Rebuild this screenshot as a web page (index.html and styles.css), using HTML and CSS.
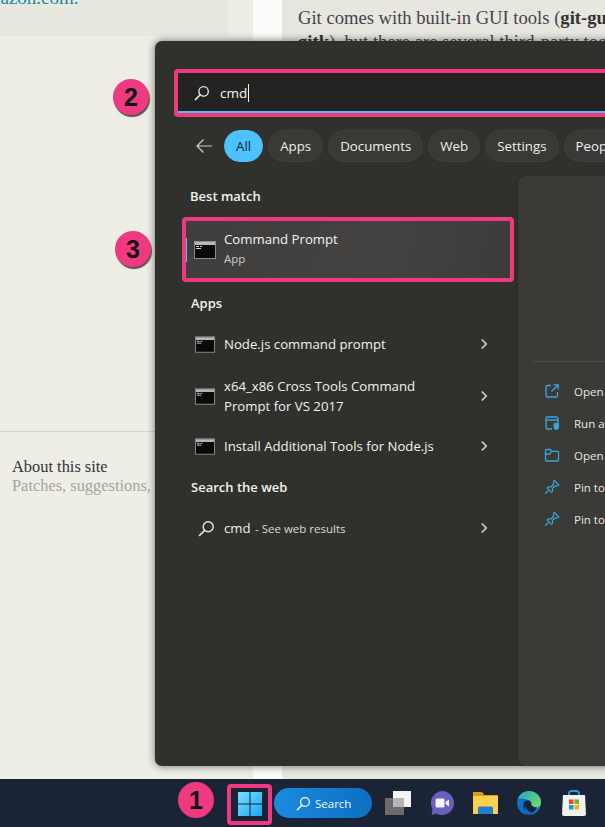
FILE: index.html
```html
<!DOCTYPE html>
<html lang="en">
<head>
<meta charset="utf-8">
<title>Open Command Prompt</title>
<link rel="stylesheet" href="styles.css">
</head>
<body>
<svg class="defs" width="0" height="0" aria-hidden="true">
  <defs>
    <symbol id="cmd" viewBox="0 0 22 18">
      <rect x="0.5" y="0.5" width="21" height="17" fill="#0a0a0a" stroke="#8e8e8c"/>
      <rect x="1" y="1" width="20" height="3" fill="#b9b9b7"/>
      <path d="M2 5.500h3M2 7.500h5M6 5.500h2" stroke="#d8d8d8" stroke-width="1"/>
    </symbol>
    <symbol id="lens" viewBox="0 0 16 16">
      <circle cx="9.6" cy="6.4" r="4.7" fill="none" stroke="currentColor" stroke-width="1.3"/>
      <path d="M6.2 9.8 1.4 14.6" stroke="currentColor" stroke-width="1.5" stroke-linecap="round"/>
    </symbol>
    <symbol id="chev" viewBox="0 0 8 12">
      <path d="M1.8 1.5 6.2 6 1.8 10.5" fill="none" stroke="currentColor" stroke-width="1.7"/>
    </symbol>
    <symbol id="pin" viewBox="0 0 16 16">
      <path d="M10 1.2 14.8 6l-1.3.6-3 .6-2.2 2.4.2 3-1 .8-4.5-4.6.9-1 2.9.2 2.4-2.3.6-3z" fill="none" stroke="#3aa6e0" stroke-width="1.2" stroke-linejoin="round"/>
      <path d="M4.6 11.4 1.2 14.8" stroke="#3aa6e0" stroke-width="1.3"/>
    </symbol>
  </defs>
</svg>

<div class="site">
  <div class="site-left">
    <div class="note"><p class="note-text">Amazon.com.</p></div>
    <div class="about">
      <p class="about-title">About this site</p>
      <p class="about-sub">Patches, suggestions, and comments are welcome.</p>
    </div>
  </div>
  <div class="site-gutter"></div>
  <div class="site-main">
    <p class="article">Git comes with built-in GUI tools (<b>git-gui</b>, <b>gitk</b>), but there are several third-party tools</p>
  </div>
</div>

<section class="start">
  <div class="searchbox">
    <div class="searchfield">
      <svg class="search-lens"><use href="#lens"/></svg>
      <span class="query">cmd</span><span class="caret"></span>
    </div>
  </div>
  <div class="filters">
    <svg class="back" viewBox="0 0 18 16"><path d="M17 8H2M8.500 1.500 2 8l6.500 6.500" fill="none" stroke="#cfcfcc" stroke-width="1.200"/></svg>
    <span class="pill pill-active">All</span>
    <span class="pill">Apps</span>
    <span class="pill">Documents</span>
    <span class="pill">Web</span>
    <span class="pill">Settings</span>
    <span class="pill">People</span>
  </div>
  <div class="results-wrap">
    <div class="results">
      <h2 class="label label-first">Best match</h2>
      <div class="best">
        <span class="best-mark"></span>
        <svg class="cmd-big"><use href="#cmd"/></svg>
        <div class="best-text">
          <span class="best-name">Command Prompt</span>
          <span class="best-kind">App</span>
        </div>
      </div>
      <h2 class="label label-apps">Apps</h2>
      <div class="row row-node">
        <svg class="cmd-small"><use href="#cmd"/></svg>
        <span class="row-text">Node.js command prompt</span>
        <svg class="chev"><use href="#chev"/></svg>
      </div>
      <div class="row row-tall">
        <svg class="cmd-small"><use href="#cmd"/></svg>
        <span class="row-text">x64_x86 Cross Tools Command Prompt for VS 2017</span>
        <svg class="chev"><use href="#chev"/></svg>
      </div>
      <div class="row row-install">
        <svg class="cmd-small"><use href="#cmd"/></svg>
        <span class="row-text">Install Additional Tools for Node.js</span>
        <svg class="chev"><use href="#chev"/></svg>
      </div>
      <h2 class="label label-web">Search the web</h2>
      <div class="row row-web">
        <svg class="web-lens"><use href="#lens"/></svg>
        <span class="row-text">cmd <small class="row-note">- See web results</small></span>
        <svg class="chev"><use href="#chev"/></svg>
      </div>
    </div>
    <aside class="detail">
      <div class="detail-rule"></div>
      <ul class="actions">
        <li class="action">
          <svg class="action-icon" viewBox="0 0 16 16"><path d="M7 2.500H3.500a1.500 1.500 0 0 0-1.500 1.500v8.500a1.500 1.500 0 0 0 1.500 1.500H12a1.500 1.500 0 0 0 1.500-1.500V9M9.500 1.800h4.700v4.700M14 2 7.500 8.500" fill="none" stroke="#3aa6e0" stroke-width="1.300"/></svg>
          <span>Open</span>
        </li>
        <li class="action">
          <svg class="action-icon" viewBox="0 0 16 16"><path d="M2 5h12M14 8V3.500A1.500 1.500 0 0 0 12.500 2h-9A1.500 1.500 0 0 0 2 3.500v9A1.500 1.500 0 0 0 3.500 14H8" fill="none" stroke="#3aa6e0" stroke-width="1.300"/><path d="M9.500 8.500 12.300 7.500l2.800 1v3c0 2-1.300 3.200-2.800 3.800-1.500-.6-2.800-1.800-2.800-3.800z" fill="#3aa6e0"/></svg>
          <span>Run as administrator</span>
        </li>
        <li class="action">
          <svg class="action-icon" viewBox="0 0 16 16"><path d="M1.500 13V3.500A1 1 0 0 1 2.500 2.500h3.700l1.500 1.800h5.800a1 1 0 0 1 1 1V13a1 1 0 0 1-1 1H2.500a1 1 0 0 1-1-1zM1.500 7h4.200l1.800-2.700" fill="none" stroke="#3aa6e0" stroke-width="1.300"/></svg>
          <span>Open file location</span>
        </li>
        <li class="action">
          <svg class="action-icon"><use href="#pin"/></svg>
          <span>Pin to Start</span>
        </li>
        <li class="action">
          <svg class="action-icon"><use href="#pin"/></svg>
          <span>Pin to taskbar</span>
        </li>
      </ul>
    </aside>
  </div>
</section>

<div class="badge badge-2">2</div>
<div class="badge badge-3">3</div>

<footer class="taskbar">
  <div class="badge badge-1">1</div>
  <div class="start-btn">
    <svg class="win-logo" viewBox="0 0 24 24">
      <defs>
        <linearGradient id="winGrad" x1="0" y1="0" x2="1" y2="1">
          <stop offset="0" stop-color="#78e0ff"/>
          <stop offset="1" stop-color="#1aa6f2"/>
        </linearGradient>
      </defs>
      <path d="M0 0h11.500v11.500H0zM12.500 0H24v11.500H12.500zM0 12.500h11.500V24H0zM12.500 12.500H24V24H12.500z" fill="url(#winGrad)"/>
    </svg>
  </div>
  <div class="task-search">
    <svg class="task-lens"><use href="#lens"/></svg>
    <span>Search</span>
  </div>
  <svg class="task task-view" viewBox="0 0 26 24">
    <rect x="0" y="7" width="19" height="17" fill="#6c6c6c"/>
    <rect x="8" y="0" width="18" height="16" fill="#f4f4f4"/>
    <rect x="8" y="7" width="11" height="9" fill="#b5b5b5"/>
  </svg>
  <svg class="task task-chat" viewBox="0 0 24 24">
    <path d="M12 0a12 12 0 1 1-6 22.400L1.600 24 2.500 18A12 12 0 0 1 12 0z" fill="#6b5fbe"/>
    <rect x="5.500" y="7.500" width="9" height="9" rx="1.500" fill="#f2f0fb"/>
    <path d="M15.500 11 19 8.500v7L15.500 13z" fill="#f2f0fb"/>
  </svg>
  <svg class="task task-folder" viewBox="0 0 25 24">
    <path d="M0 1h9l2.500 3H25v2H0z" fill="#d99a1c"/>
    <rect x="0" y="5" width="25" height="18" fill="#fbcf4f"/>
    <path d="M5 23v-6a1.500 1.500 0 0 1 1.500-1.500h12A1.500 1.500 0 0 1 20 17v6z" fill="#1e80cf"/>
  </svg>
  <svg class="task task-edge" viewBox="0 0 24 24">
    <defs>
      <linearGradient id="edgeA" x1="0" y1="0" x2="1" y2="1">
        <stop offset="0" stop-color="#1fa6c4"/>
        <stop offset="1" stop-color="#7fe05c"/>
      </linearGradient>
    </defs>
    <circle cx="12" cy="12" r="12" fill="#0f6fc4"/>
    <path d="M1 8C3 2 8 0 12 0c7 0 12 5 12 11 0 4-3 6-6 6-2 0-4-1-4-3 1-2 1-4-2-5C8 7.500 3 7 1 8z" fill="url(#edgeA)"/>
    <path d="M6.500 13c0-2 2-3.500 4-3.500s3.500 1.500 3.500 3c0 1.500 2 4.500 6 3.500-2 4.500-6 7-9 7.500-3-1-4.500-6-4.500-10.500z" fill="#1b2336"/>
    <path d="M8.500 14.500c0 4 3 7 7 6.500-1 .8-2.500 1.800-4.500 2-3-1-4-5-2.500-8.500z" fill="#0f6fc4"/>
  </svg>
  <svg class="task task-store" viewBox="0 0 24 26">
    <path d="M7 7V3.500A2.500 2.500 0 0 1 9.500 1h5A2.500 2.500 0 0 1 17 3.500V7" fill="none" stroke="#22a2dd" stroke-width="1.800"/>
    <path d="M1 5h22l1 19a2 2 0 0 1-2 2H2a2 2 0 0 1-2-2z" fill="#f1f1ef"/>
    <rect x="7" y="9.500" width="4.500" height="4.500" fill="#e8452c"/>
    <rect x="12.500" y="9.500" width="4.500" height="4.500" fill="#6cb52d"/>
    <rect x="7" y="15" width="4.500" height="4.500" fill="#1f9ae0"/>
    <rect x="12.500" y="15" width="4.500" height="4.500" fill="#f7b500"/>
  </svg>
</footer>
</body>
</html>
```

FILE: styles.css
```css
* { box-sizing: border-box; }
html, body { margin: 0; height: 100%; }
body {
  position: relative;
  width: 605px;
  height: 827px;
  overflow: hidden;
  background: #eeeee6;
  font-family: "Open Sans", "Noto Sans", sans-serif;
}
p, h2, ul { margin: 0; padding: 0; }
.defs { position: absolute; }

/* Web page behind the start menu */
.site {
  display: grid;
  grid-template-columns: 253px 29px 1fr;
  height: 779px;
  font-family: "Liberation Serif", serif;
}
.site-left { overflow: hidden; }
.note {
  width: 228px;
  height: 36px;
  background: #e8e8e1;
  overflow: hidden;
}
.note-text {
  margin: -12px 0 0 -28px;
  font-size: 19px;
  line-height: 20px;
  color: #1d8aa0;
  white-space: nowrap;
}
.about {
  margin-top: 395px;
  border-top: 1px solid #d5d5ce;
  padding: 25px 0 0 12px;
  white-space: nowrap;
}
.about-title { font-size: 16.400px; line-height: 19px; color: #333; }
.about-sub { font-size: 16.400px; line-height: 19px; color: #a5a5a0; }
.site-gutter { background: #fbfbf9; }
.site-main { background: #e7e7e0; padding: 6px 0 0 16px; }
.article {
  width: 350px;
  font-size: 18.600px;
  line-height: 24px;
  color: #44434a;
}
.article b { color: #333; }

/* Start menu window */
.start {
  position: absolute;
  left: 155px;
  top: 41px;
  width: 520px;
  height: 725px;
  padding-top: 28px;
  background: #30302d;
  border-radius: 7px;
  box-shadow: 0 0 9px rgba(0, 0, 0, .55);
  display: flex;
  flex-direction: column;
  color: #f2f2f0;
}
.searchbox {
  margin-left: 19px;
  height: 48px;
  border: 4px solid #ef3a80;
  border-radius: 4px;
  background: #55b8ee;
  padding-bottom: 2px;
}
.searchfield {
  height: 100%;
  background: #232322;
  display: flex;
  align-items: center;
  padding: 2px 0 0 16px;
}
.search-lens { width: 16px; height: 16px; color: #e8e8e8; }
.query { margin-left: 10px; font-size: 13.500px; color: #f4f4f4; }
.caret { width: 1px; height: 18px; margin-left: 1px; background: #f4f4f4; }
.filters {
  margin: 13px 0 0 40px;
  display: flex;
  align-items: center;
  gap: 5px;
  height: 32px;
}
.back { width: 18px; height: 16px; margin-right: 6px; }
.pill {
  height: 32px;
  padding: 0 11px;
  display: flex;
  align-items: center;
  border-radius: 16px;
  background: #393936;
  border: 1px solid #41413e;
  font-size: 13.300px;
  color: #efefed;
  white-space: nowrap;
}
.pill-active {
  background: #4cc2ff;
  border-color: #4cc2ff;
  color: #10212c;
}
.results-wrap { display: flex; flex: 1; margin-top: 14px; min-height: 0; }
.results { width: 363px; flex: none; }
.label {
  margin-left: 35px;
  font-size: 13px;
  font-weight: 600;
  line-height: 20px;
  color: #f2f2f0;
}
.label-first { margin-top: 10px; }
.label-apps { margin-top: 11px; margin-left: 36px; }
.label-web { margin-top: 11px; margin-left: 36px; }
.best {
  position: relative;
  margin: 11px 0 0 27px;
  width: 332px;
  height: 65px;
  border: 4px solid #ef3a80;
  border-radius: 4px;
  background: linear-gradient(100deg, #403e3d, #454342 60%, #3e3c3b);
  display: flex;
  align-items: center;
  padding: 0 0 2px 8px;
}
.best-mark {
  position: absolute;
  left: 0;
  top: 17px;
  width: 1px;
  height: 24px;
  background: #4cc2ff;
}
.cmd-big { width: 22px; height: 18px; flex: none; margin-top: 2px; }
.best-text { margin-left: 8px; display: flex; flex-direction: column; }
.best-name { font-size: 13.200px; line-height: 20px; color: #f4f4f2; }
.best-kind { font-size: 11.500px; line-height: 20px; color: #c9c9c6; }
.row {
  margin-left: 40px;
  width: 293px;
  display: flex;
  align-items: center;
  font-size: 13.200px;
  line-height: 20px;
  color: #f2f2f0;
}
.row-node { height: 40px; margin-top: 11px; }
.row-tall { height: 52px; margin-top: 6px; }
.row-install { height: 40px; margin-top: 4px; }
.row-web { height: 40px; margin-top: 11px; }
.cmd-small { width: 20px; height: 17px; flex: none; }
.web-lens { width: 17px; height: 17px; margin-left: 3px; color: #e8e8e8; flex: none; }
.row-text { margin-left: 9px; width: 222px; }
.row-install .row-text { width: 232px; white-space: nowrap; }
.row-note { margin-left: 1px; font-size: 11.500px; color: #dcdcda; }
.chev { width: 8px; height: 12px; margin-left: auto; color: #cfcfcc; flex: none; }

/* Detail pane */
.detail {
  flex: 1;
  background: #3a3a37;
  border-radius: 8px 0 0 8px;
  padding: 185px 0 0 15px;
  white-space: nowrap;
  box-shadow: -1px 0 2px rgba(0, 0, 0, .12);
}
.detail-rule { height: 1px; background: #4f4f4c; }
.actions { list-style: none; margin-top: 13px; }
.action {
  height: 32px;
  display: flex;
  align-items: center;
  font-size: 11.500px;
  color: #e8e8e6;
}
.action-icon { width: 16px; height: 16px; margin: 0 14px 0 11px; flex: none; }

/* Numbered callouts */
.badge {
  position: absolute;
  width: 36px;
  height: 36px;
  border-radius: 50%;
  background: #ef3a80;
  box-shadow: 1px 2px 1px rgba(0, 0, 0, .65);
  display: flex;
  align-items: center;
  justify-content: center;
  font-family: "Liberation Sans", sans-serif;
  font-size: 25px;
  font-weight: 700;
  color: #111;
}
.badge-2 { left: 113px; top: 79px; }
.badge-3 { left: 115px; top: 231px; }
.badge-1 { left: 178px; top: 3px; box-shadow: none; }

/* Taskbar */
.taskbar {
  position: absolute;
  left: 0;
  right: 0;
  bottom: 0;
  height: 48px;
  background: #1b2336;
  display: flex;
  align-items: center;
  padding-left: 227px;
}
.start-btn {
  width: 45px;
  height: 41px;
  margin-top: 2px;
  border: 4px solid #ef3a80;
  border-radius: 4px;
  display: flex;
  align-items: center;
  justify-content: center;
}
.win-logo { width: 24px; height: 24px; }
.task-search {
  margin-left: 2px;
  width: 98px;
  height: 30px;
  border-radius: 15px;
  background: linear-gradient(90deg, #1a8be0, #0e6fc0);
  display: flex;
  align-items: center;
  padding-left: 22px;
  font-size: 11.500px;
  color: #f4f8fb;
}
.task-lens { width: 15px; height: 15px; margin-right: 4px; color: #fff; }
.task { flex: none; }
.task-view { width: 26px; height: 24px; margin-left: 13px; }
.task-chat { width: 24px; height: 24px; margin-left: 19px; }
.task-folder { width: 25px; height: 24px; margin-left: 19px; }
.task-edge { width: 24px; height: 24px; margin-left: 19px; }
.task-store { width: 24px; height: 26px; margin-left: 21px; }
```
